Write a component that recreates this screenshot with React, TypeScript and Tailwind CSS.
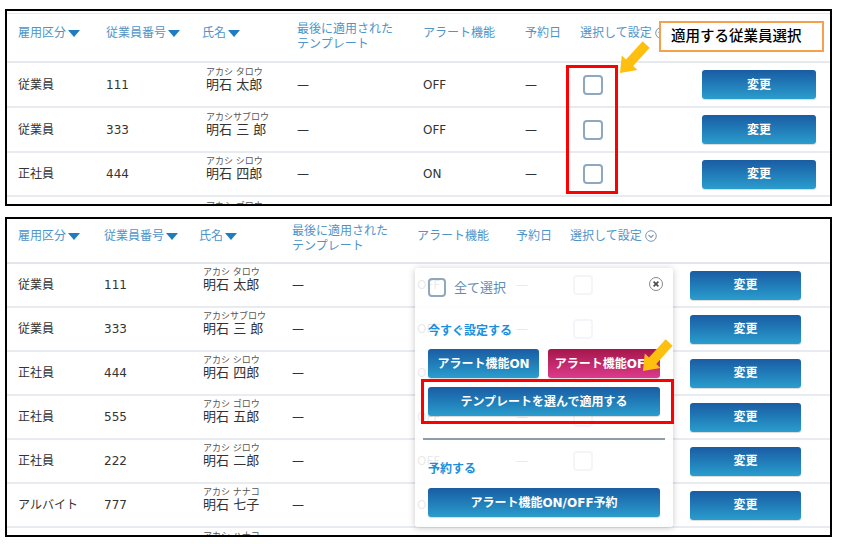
import React from "react";

type Row = {
  kind: string;
  no: string;
  kana: string;
  name: string;
  alert: string;
};

const rows: Row[] = [
  { kind: "従業員", no: "111", kana: "アカシ タロウ", name: "明石 太郎", alert: "OFF" },
  { kind: "従業員", no: "333", kana: "アカシサブロウ", name: "明石 三 郎", alert: "OFF" },
  { kind: "正社員", no: "444", kana: "アカシ シロウ", name: "明石 四郎", alert: "ON" },
  { kind: "正社員", no: "555", kana: "アカシ ゴロウ", name: "明石 五郎", alert: "OFF" },
  { kind: "正社員", no: "222", kana: "アカシ ジロウ", name: "明石 二郎", alert: "OFF" },
  { kind: "アルバイト", no: "777", kana: "アカシ ナナコ", name: "明石 七子", alert: "OFF" },
  { kind: "正社員", no: "888", kana: "アカシ ハナコ", name: "明石 花子", alert: "OFF" }
];

type Layout = {
  cols: string[];
  btn: string;
  header: string;
  headerPt: string;
  twoMt: string;
  rowH: string[];
};

const topLayout: Layout = {
  cols: ["w-[88px]", "w-[96px]", "w-[95px]", "w-[126px]", "w-[102px]", "w-[55px]", "w-[122px]"],
  btn: "w-[114px]",
  header: "mt-[2px] h-[50px] border-t border-[#e6e9ed]",
  headerPt: "pt-[11px]",
  twoMt: "-mt-[3px]",
  rowH: ["h-[45px]", "h-[45px]", "h-[44px]", "h-[45px]"]
};

const bottomLayout: Layout = {
  cols: ["w-[86px]", "w-[95px]", "w-[93px]", "w-[125px]", "w-[99px]", "w-[54px]", "w-[120px]"],
  btn: "w-[111px]",
  header: "h-[45px]",
  headerPt: "pt-[9px]",
  twoMt: "-mt-[4px]",
  rowH: ["h-[44px]", "h-[44px]", "h-[44px]", "h-[44px]", "h-[44px]", "h-[44px]", "h-[44px]"]
};

const SortIcon = () => (
  <svg width="12" height="7" viewBox="0 0 12 7" className="ml-[2px] shrink-0">
    <path d="M0 0h12L6 7z" fill="#1d7cc2" />
  </svg>
);

const ChevronCircle = () => (
  <svg width="12" height="12" viewBox="0 0 12 12" className="ml-[3px] shrink-0">
    <circle cx="6" cy="6" r="5.3" fill="none" stroke="#7f97ad" strokeWidth="1" />
    <path d="M3.6 5 6 7.4 8.4 5" fill="none" stroke="#7f97ad" strokeWidth="1.1" />
  </svg>
);

const Arrow = ({ className }: { className: string }) => (
  <svg width="36" height="36" viewBox="0 0 36 36" className={className}>
    <polygon
      points="3,32 20.5,29 16.2,25 32.6,6.8 25.6,0.3 9,18.6 4.8,14.6"
      fill="#ffbf0f"
    />
  </svg>
);

const Box = ({ size }: { size: string }) => (
  <span className={`block ${size} rounded-[4px] border-2 border-[#8ea8bf]`} />
);

const BlueButton = ({ className, children }: { className: string; children: React.ReactNode }) => (
  <button
    className={`h-[29px] rounded-[3px] bg-linear-to-b from-[#1a5ca3] to-[#2b9dcd] text-[12px] font-bold text-white shadow-[0_1px_1px_rgba(0,0,0,0.15)] ${className}`}
  >
    {children}
  </button>
);

const EmployeeTable = ({ layout }: { layout: Layout }) => {
  const c = layout.cols;
  const head = "flex shrink-0 items-center whitespace-nowrap leading-[16px]";
  return (
    <div>
      {/* ヘッダー */}
      <div
        className={`flex items-start border-b-2 border-[#e3e7ec] pl-[11px] text-[12px] text-[#4f94c8] ${layout.header} ${layout.headerPt}`}
      >
        <div className={`${head} ${c[0]}`}>
          雇用区分
          <SortIcon />
        </div>
        <div className={`${head} ${c[1]}`}>
          従業員番号
          <SortIcon />
        </div>
        <div className={`${head} ${c[2]}`}>
          氏名
          <SortIcon />
        </div>
        <div className={`shrink-0 leading-[15px] ${c[3]} ${layout.twoMt}`}>
          最後に適用された
          <br />
          テンプレート
        </div>
        <div className={`${head} ${c[4]}`}>アラート機能</div>
        <div className={`${head} ${c[5]}`}>予約日</div>
        <div className={`${head} ${c[6]}`}>
          選択して設定
          <ChevronCircle />
        </div>
      </div>

      {/* 行 */}
      {layout.rowH.map((h, i) => {
        const r = rows[i];
        return (
          <div
            key={i}
            className={`flex items-center border-b-2 border-[#e8ebef] pl-[11px] text-[12px] text-[#333] ${h}`}
          >
            <div className={`shrink-0 whitespace-nowrap ${c[0]}`}>{r.kind}</div>
            <div className={`shrink-0 ${c[1]}`}>{r.no}</div>
            <div className={`flex shrink-0 flex-col pb-[10px] pl-[4px] ${c[2]}`}>
              <span className="whitespace-pre text-[9px] leading-[10px] text-[#555]">{r.kana}</span>
              <span className="whitespace-pre text-[13px] leading-[16px]">{r.name}</span>
            </div>
            <div className={`shrink-0 ${c[3]}`}>—</div>
            <div className={`shrink-0 ${c[4]}`}>{r.alert}</div>
            <div className={`shrink-0 ${c[5]}`}>—</div>
            <div className={`shrink-0 pl-[3px] ${c[6]}`}>
              <Box size="h-[20px] w-[20px]" />
            </div>
            <BlueButton className={layout.btn}>変更</BlueButton>
          </div>
        );
      })}
    </div>
  );
};

export default function App() {
  return (
    <div className="min-h-[544px] bg-white pl-[5px] pt-[9px] font-['DejaVu_Sans','Noto_Sans_CJK_JP',sans-serif] text-[#333]">
      {/* 上：従業員選択 */}
      <div className="relative h-[197px] w-[827px] overflow-hidden border-2 border-black">
        <EmployeeTable layout={topLayout} />

        <div className="absolute left-[559px] top-[54px] h-[129px] w-[52px] border-[3px] border-[#ff0000]" />
        <div className="absolute left-[652px] top-[10px] flex h-[31px] w-[165px] items-center border-2 border-[#f4a04c] bg-white pl-[10px] text-[14.5px] font-medium text-black">
          適用する従業員選択
        </div>
        <Arrow className="absolute left-[610px] top-[30px]" />
      </div>

      {/* 下：選択して設定メニュー */}
      <div className="relative mt-[11px] h-[320px] w-[827px] overflow-hidden border-2 border-black">
        <EmployeeTable layout={bottomLayout} />

        <div className="absolute left-[408px] top-[49px] h-[259px] w-[258px] rounded-[3px] bg-white/[0.89] px-[13px] pt-[10px] shadow-[0_1px_7px_rgba(0,0,0,0.22)]">
          <div className="flex h-[19px] items-center">
            <Box size="h-[19px] w-[18px]" />
            <span className="ml-[8px] text-[13px] text-[#5d8db5]">全て選択</span>
          </div>
          <span className="absolute right-[10px] top-[9px] flex h-[14px] w-[14px] items-center justify-center rounded-full border-[1.5px] border-[#8a8a8a]">
            <svg width="6" height="6" viewBox="0 0 6 6">
              <path d="M0.6 0.6 5.4 5.4M5.4 0.6 0.6 5.4" stroke="#4a4a4a" strokeWidth="1.6" />
            </svg>
          </span>

          <div className="mt-[26px] text-[12px] font-bold leading-[16px] text-[#1a8fe0]">今すぐ設定する</div>
          <div className="mt-[10px] flex gap-[9px]">
            <BlueButton className="w-[111px]">アラート機能ON</BlueButton>
            <button className="h-[29px] w-[112px] rounded-[3px] bg-linear-to-b from-[#a5154a] to-[#dc3a8c] text-[12px] font-bold text-white shadow-[0_1px_1px_rgba(0,0,0,0.15)]">
              アラート機能OFF
            </button>
          </div>
          <BlueButton className="mt-[9px] w-[232px]">テンプレートを選んで適用する</BlueButton>

          <div className="-mx-[5px] mt-[22px] h-[2px] bg-[#8e9cab]" />

          <div className="mt-[21px] text-[12px] font-bold leading-[16px] text-[#1a8fe0]">予約する</div>
          <BlueButton className="mt-[11px] w-[232px]">アラート機能ON/OFF予約</BlueButton>

          <div className="absolute left-[6px] top-[111px] h-[45px] w-[253px] border-[3px] border-[#ff0000]" />
        </div>

        <Arrow className="absolute left-[633px] top-[120px]" />
      </div>
    </div>
  );
}
